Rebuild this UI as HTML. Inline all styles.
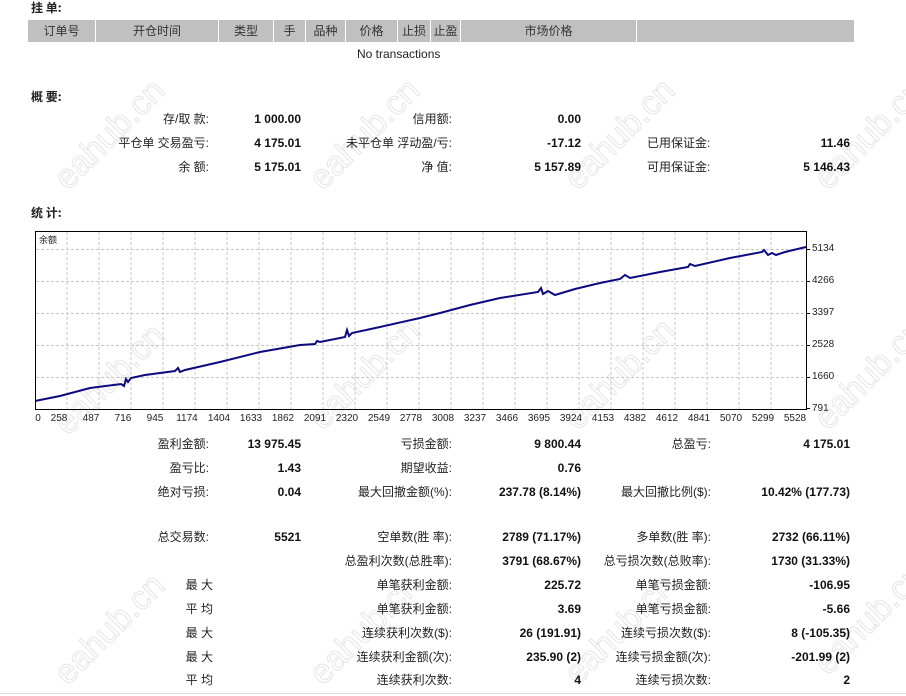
<!DOCTYPE html>
<html><head><meta charset="utf-8"><style>
body{margin:0;width:906px;height:696px;background:#fff;position:relative;overflow:hidden;font-family:"Liberation Sans","Noto Sans CJK SC",sans-serif;font-size:12px;color:#222}
.a{position:absolute;white-space:nowrap;line-height:16px}
.r{position:absolute;white-space:nowrap;line-height:16px;text-align:right;width:240px}
.b{font-weight:bold;color:#111}
.h{font-weight:bold;font-family:"Noto Sans CJK SC",sans-serif}
.hdr{position:absolute;left:28px;top:20px;width:826px;height:22px;background:#c0c0c0}
.c{position:absolute;top:0;height:22px;line-height:22px;text-align:center;border-right:1px solid #fff;color:#333}
.w{position:absolute;font-size:34px;color:transparent;-webkit-text-stroke:1px #e6e6e6;transform:rotate(-45deg);white-space:nowrap;font-family:"Liberation Sans",sans-serif}
</style></head><body>
<div class="w" style="left:40px;top:115px">eahub.cn</div>
<div class="w" style="left:295px;top:115px">eahub.cn</div>
<div class="w" style="left:550px;top:115px">eahub.cn</div>
<div class="w" style="left:800px;top:115px">eahub.cn</div>
<div class="w" style="left:40px;top:360px">eahub.cn</div>
<div class="w" style="left:295px;top:355px">eahub.cn</div>
<div class="w" style="left:550px;top:355px">eahub.cn</div>
<div class="w" style="left:800px;top:355px">eahub.cn</div>
<div class="w" style="left:40px;top:610px">eahub.cn</div>
<div class="w" style="left:295px;top:610px">eahub.cn</div>
<div class="w" style="left:550px;top:610px">eahub.cn</div>
<div class="w" style="left:800px;top:600px">eahub.cn</div>

<div class="a h" style="left:31px;top:0px">挂 单:</div>
<div class="hdr">
<div class="c" style="left:0;width:67px">订单号</div>
<div class="c" style="left:68px;width:122px">开仓时间</div>
<div class="c" style="left:191px;width:54px">类型</div>
<div class="c" style="left:246px;width:31px">手</div>
<div class="c" style="left:278px;width:39px">品种</div>
<div class="c" style="left:318px;width:51px">价格</div>
<div class="c" style="left:370px;width:32px">止损</div>
<div class="c" style="left:403px;width:29px">止盈</div>
<div class="c" style="left:433px;width:175px">市场价格</div>
</div>
<div class="a" style="left:357px;top:46px">No transactions</div>

<div class="a h" style="left:31px;top:89px">概 要:</div>
<div class="r" style="left:-31px;top:111px">存/取 款:</div><div class="r b" style="left:61px;top:111px">1 000.00</div>
<div class="r" style="left:212px;top:111px">信用额:</div><div class="r b" style="left:341px;top:111px">0.00</div>
<div class="r" style="left:-31px;top:135px">平仓单 交易盈亏:</div><div class="r b" style="left:61px;top:135px">4 175.01</div>
<div class="r" style="left:212px;top:135px">未平仓单 浮动盈/亏:</div><div class="r b" style="left:341px;top:135px">-17.12</div>
<div class="a" style="left:647px;top:135px">已用保证金:</div><div class="r b" style="left:610px;top:135px">11.46</div>
<div class="r" style="left:-31px;top:159px">余 额:</div><div class="r b" style="left:61px;top:159px">5 175.01</div>
<div class="r" style="left:212px;top:159px">净 值:</div><div class="r b" style="left:341px;top:159px">5 157.89</div>
<div class="a" style="left:647px;top:159px">可用保证金:</div><div class="r b" style="left:610px;top:159px">5 146.43</div>

<div class="a h" style="left:31px;top:205px">统 计:</div>
<svg style="position:absolute;left:0;top:0" width="906" height="696">
<g stroke="#c8c8c8" stroke-dasharray="3,2" stroke-width="1">
<path d="M67 232V410M99 232V410M131 232V410M163 232V410M195 232V410M227 232V410M259 232V410M291 232V410M323 232V410M355 232V410M387 232V410M419 232V410M451 232V410M483 232V410M515 232V410M547 232V410M579 232V410M611 232V410M643 232V410M675 232V410M707 232V410M739 232V410M771 232V410"/>
<path d="M36 249.5H806M36 281.5H806M36 313.5H806M36 345.5H806M36 377.5H806"/>
</g>
<rect x="35.5" y="231.5" width="771" height="178" fill="none" stroke="#000"/>
<g stroke="#000"><path d="M807 249.5h3M807 281.5h3M807 313.5h3M807 345.5h3M807 377.5h3M807 408.5h3"/></g>
<polyline fill="none" stroke="#0b0b80" stroke-width="2" points="35,401 60,396 90,388 121,384 124,386 126,379 128,382 131,378 145,375 175,371 178,368 180,372 185,370 220,362 260,352 300,345 315,344 317,341 320,342 345,337 347,330 349,336 352,333 380,327 420,318 440,313 470,305 500,298 538,292 541,288 543,294 548,291 555,295 575,289 600,283 620,279 625,275 630,278 660,272 688,267 690,264 695,266 730,258 762,252 764,250 768,255 772,253 776,255 785,252 806,247"/>
<g font-family="Liberation Sans,sans-serif" font-size="10" fill="#222">
<text x="812" y="251">5134</text><text x="812" y="283">4266</text><text x="812" y="315">3397</text><text x="812" y="347">2528</text><text x="812" y="379">1660</text><text x="812" y="411">791</text>
<g text-anchor="middle">
<text x="38" y="421">0</text><text x="59" y="421">258</text><text x="91" y="421">487</text><text x="123" y="421">716</text><text x="155" y="421">945</text><text x="187" y="421">1174</text><text x="219" y="421">1404</text><text x="251" y="421">1633</text><text x="283" y="421">1862</text><text x="315" y="421">2091</text><text x="347" y="421">2320</text><text x="379" y="421">2549</text><text x="411" y="421">2778</text><text x="443" y="421">3008</text><text x="475" y="421">3237</text><text x="507" y="421">3466</text><text x="539" y="421">3695</text><text x="571" y="421">3924</text><text x="603" y="421">4153</text><text x="635" y="421">4382</text><text x="667" y="421">4612</text><text x="699" y="421">4841</text><text x="731" y="421">5070</text><text x="763" y="421">5299</text><text x="795" y="421">5528</text>
</g></g>
<text x="39" y="243" font-family="Noto Sans CJK SC,sans-serif" font-size="9" fill="#222">余额</text>
<path d="M0 693.5H906" stroke="#ddd"/>
</svg>

<div class="r" style="left:-31px;top:436px">盈利金额:</div><div class="r b" style="left:61px;top:436px">13 975.45</div>
<div class="r" style="left:212px;top:436px">亏损金额:</div><div class="r b" style="left:341px;top:436px">9 800.44</div>
<div class="r" style="left:471px;top:436px">总盈亏:</div><div class="r b" style="left:610px;top:436px">4 175.01</div>
<div class="r" style="left:-31px;top:460px">盈亏比:</div><div class="r b" style="left:61px;top:460px">1.43</div>
<div class="r" style="left:212px;top:460px">期望收益:</div><div class="r b" style="left:341px;top:460px">0.76</div>
<div class="r" style="left:-31px;top:484px">绝对亏损:</div><div class="r b" style="left:61px;top:484px">0.04</div>
<div class="r" style="left:212px;top:484px">最大回撤金额(%):</div><div class="r b" style="left:341px;top:484px">237.78 (8.14%)</div>
<div class="r" style="left:471px;top:484px">最大回撤比例($):</div><div class="r b" style="left:610px;top:484px">10.42% (177.73)</div>

<div class="r" style="left:-31px;top:529px">总交易数:</div><div class="r b" style="left:61px;top:529px">5521</div>
<div class="r" style="left:212px;top:529px">空单数(胜 率):</div><div class="r b" style="left:341px;top:529px">2789 (71.17%)</div>
<div class="r" style="left:471px;top:529px">多单数(胜 率):</div><div class="r b" style="left:610px;top:529px">2732 (66.11%)</div>
<div class="r" style="left:212px;top:553px">总盈利次数(总胜率):</div><div class="r b" style="left:341px;top:553px">3791 (68.67%)</div>
<div class="r" style="left:471px;top:553px">总亏损次数(总败率):</div><div class="r b" style="left:610px;top:553px">1730 (31.33%)</div>
<div class="r" style="left:-27px;top:577px">最 大</div>
<div class="r" style="left:212px;top:577px">单笔获利金额:</div><div class="r b" style="left:341px;top:577px">225.72</div>
<div class="r" style="left:471px;top:577px">单笔亏损金额:</div><div class="r b" style="left:610px;top:577px">-106.95</div>
<div class="r" style="left:-27px;top:601px">平 均</div>
<div class="r" style="left:212px;top:601px">单笔获利金额:</div><div class="r b" style="left:341px;top:601px">3.69</div>
<div class="r" style="left:471px;top:601px">单笔亏损金额:</div><div class="r b" style="left:610px;top:601px">-5.66</div>
<div class="r" style="left:-27px;top:625px">最 大</div>
<div class="r" style="left:212px;top:625px">连续获利次数($):</div><div class="r b" style="left:341px;top:625px">26 (191.91)</div>
<div class="r" style="left:471px;top:625px">连续亏损次数($):</div><div class="r b" style="left:610px;top:625px">8 (-105.35)</div>
<div class="r" style="left:-27px;top:649px">最 大</div>
<div class="r" style="left:212px;top:649px">连续获利金额(次):</div><div class="r b" style="left:341px;top:649px">235.90 (2)</div>
<div class="r" style="left:471px;top:649px">连续亏损金额(次):</div><div class="r b" style="left:610px;top:649px">-201.99 (2)</div>
<div class="r" style="left:-27px;top:672px">平 均</div>
<div class="r" style="left:212px;top:672px">连续获利次数:</div><div class="r b" style="left:341px;top:672px">4</div>
<div class="r" style="left:471px;top:672px">连续亏损次数:</div><div class="r b" style="left:610px;top:672px">2</div>
</body></html>
